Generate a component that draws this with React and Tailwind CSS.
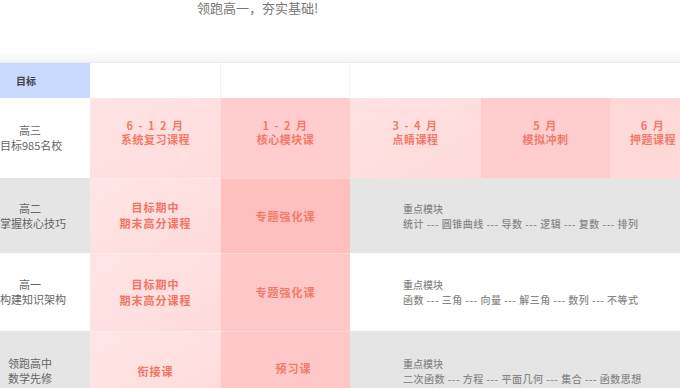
const font = { fontFamily: '"Noto Sans CJK SC", "Noto Sans", sans-serif' };

const rows = [
  {
    title: ["高三", "目标985名校"],
    gray: false,
    h: "h-[80px]",
  },
  {
    title: ["高二", "掌握核心技巧"],
    gray: true,
    h: "h-[75px]",
    a: ["目标期中", "期末高分课程"],
    b: "专题强化课",
    mod: "统计 --- 圆锥曲线 --- 导数 --- 逻辑 --- 复数 --- 排列",
  },
  {
    title: ["高一", "构建知识架构"],
    gray: false,
    h: "h-[78px]",
    a: ["目标期中", "期末高分课程"],
    b: "专题强化课",
    mod: "函数 --- 三角 --- 向量 --- 解三角 --- 数列 --- 不等式",
  },
  {
    title: ["领跑高中", "数学先修"],
    gray: true,
    h: "h-[80px]",
    a: ["衔接课"],
    b: "预习课",
    mod: "二次函数 --- 方程 --- 平面几何 --- 集合 --- 函数思想",
  },
];

const senior = [
  { m: "6 - 1 2 月", t: "系统复习课程", bg: "bg-gradient-to-br from-[#ffe4e4] to-[#ffdcdc]", w: "w-[131px]" },
  { m: "1 - 2 月", t: "核心模块课", bg: "bg-[#ffcdcd]", w: "w-[129px]" },
  { m: "3 - 4 月", t: "点睛课程", bg: "bg-gradient-to-br from-[#ffe2e2] to-[#ffdada]", w: "w-[131px]" },
  { m: "5 月", t: "模拟冲刺", bg: "bg-[#ffcdcd]", w: "w-[129px]" },
  { m: "6 月", t: "押题课程", bg: "bg-[#ffd8d8]", w: "w-[86px]" },
];

const RowTitle = ({ lines, gray }) => (
  <div className={`w-[90px] shrink-0 flex items-center ${gray ? "bg-[#e5e5e5]" : "bg-white"}`}>
    <div className="w-[60px] text-center text-[11px] leading-[15px] text-[#666] whitespace-nowrap">
      {lines.map((l) => (
        <div key={l}>{l}</div>
      ))}
    </div>
  </div>
);

export default function App() {
  return (
    <div className="w-[680px] h-[388px] overflow-hidden bg-white" style={font}>
      <div className="h-[50px] pl-[197px] pt-[1px] text-[13px] leading-[14px] text-[#777]">领跑高一，夯实基础!</div>
      <div className="h-[12px] bg-gradient-to-b from-white to-[#f4f4f4]"></div>
      <div className="border-t border-[#ececec]">
        {/* header row */}
        <div className="flex h-[35px]">
          <div className="w-[90px] shrink-0 bg-[#c9dafe] flex items-center pl-[16px] text-[10px] font-bold text-[#444]">
            目标
          </div>
          <div className="w-[131px] shrink-0 border-r border-[#f3f3f3]"></div>
          <div className="w-[129px] shrink-0 border-r border-[#f3f3f3]"></div>
          <div className="flex-1"></div>
        </div>

        {/* 高三 */}
        <div className={`flex ${rows[0].h}`}>
          <RowTitle lines={rows[0].title} gray={false} />
          {senior.map((c) => (
            <div
              key={c.t}
              className={`${c.w} shrink-0 ${c.bg} flex flex-col items-center justify-center pb-[12px] text-[11px] leading-[14px] font-semibold text-[#f27a68] whitespace-nowrap`}
            >
              <div className="tracking-[1.5px]">{c.m}</div>
              <div className="tracking-[0.5px]">{c.t}</div>
            </div>
          ))}
        </div>

        {rows.slice(1).map((r, i) => (
          <div key={r.title[0]} className={`flex ${r.h}`}>
            <RowTitle lines={r.title} gray={r.gray} />
            <div className="w-[131px] shrink-0 bg-gradient-to-br from-[#ffe6e6] to-[#ffdada] border-t border-[#ffeaea] flex flex-col items-center justify-center pb-[2px] text-[11px] leading-[16px] font-semibold text-[#f27462] tracking-[1px]">
              {r.a.map((l) => (
                <div key={l}>{l}</div>
              ))}
            </div>
            <div
              className={`w-[129px] shrink-0 border-t border-[#ffd6d6] flex items-center justify-center text-[11px] font-semibold tracking-[1px] text-[#f27a68] ${
                i === 0 ? "bg-[#ffbfbf]" : "bg-[#ffc8c8]"
              } ${i === 2 ? "pl-[16px] pb-[6px]" : ""}`}
            >
              {r.b}
            </div>
            <div className={`flex-1 flex flex-col justify-center pl-[53px] text-[10px] leading-[15px] text-[#888] whitespace-nowrap ${r.gray ? "bg-[#e5e5e5]" : "bg-white"}`}>
              <div className="font-medium">重点模块</div>
              <div className="font-medium tracking-[0.5px]">{r.mod}</div>
            </div>
          </div>
        ))}
      </div>
    </div>
  );
}
